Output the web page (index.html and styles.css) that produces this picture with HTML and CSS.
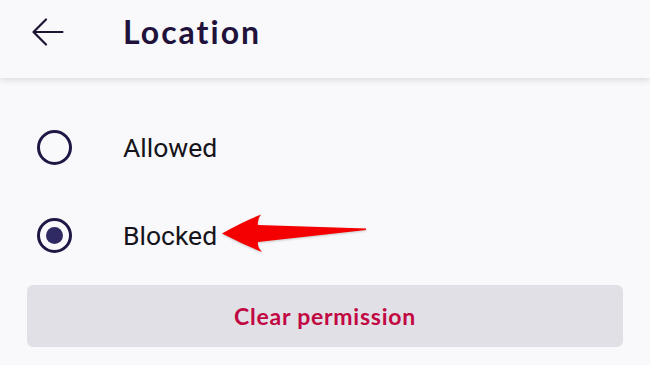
FILE: index.html
```html
<!DOCTYPE html>
<html>
<head>
<meta charset="utf-8">
<link rel="stylesheet" href="styles.css">
</head>
<body>
<div class="page">
  <header class="topbar">
    <svg class="back" width="32" height="28" viewBox="0 0 32 28" fill="none" stroke="#1f1533" stroke-width="2.2" stroke-linecap="round" stroke-linejoin="round">
      <path d="M30.5 14 H2 M14 1.5 L1.5 14 L14 26.5"/>
    </svg>
    <h1 class="title">Location</h1>
  </header>
  <main class="content">
    <div class="row">
      <span class="radio"></span>
      <span class="label">Allowed</span>
    </div>
    <div class="row">
      <span class="radio checked"></span>
      <span class="label">Blocked</span>
    </div>
    <button class="clear">Clear permission</button>
  </main>
  <svg class="pointer" width="155" height="45" viewBox="215 210 155 45">
    <path d="M222,233.5 Q242,222 261,214.5 Q257,219 258,225 L366,228.6 L366,230 L258,242 Q257,246.5 262,252 Q242,244 222,233.5 Z" fill="#f50000"/>
  </svg>
</div>
</body>
</html>
```
FILE: styles.css
```css
html, body {
  margin: 0;
  padding: 0;
  background: #f9f9fb;
}
.page {
  position: relative;
  width: 650px;
  height: 365px;
  overflow: hidden;
  background: #f9f9fb;
}
.topbar {
  height: 63px;
  padding-bottom: 15px;
  display: flex;
  align-items: center;
  padding-left: 32px;
  background: #f9f9fb;
  box-shadow: 0 2px 7px rgba(0, 0, 0, 0.13);
  position: relative;
  z-index: 1;
}
.back {
  display: block;
  flex: none;
}
.title {
  margin: 0 0 0 59px;
  font-family: Lato, "Open Sans", sans-serif;
  font-weight: 700;
  font-size: 32px;
  color: #20123a;
  letter-spacing: 2px;
}
.content {
  padding-top: 25px;
  display: flex;
  flex-direction: column;
}
.row {
  height: 88px;
  display: flex;
  align-items: center;
  padding-left: 37px;
}
.radio {
  box-sizing: border-box;
  width: 35px;
  height: 35px;
  border: 3.5px solid #1e1844;
  border-radius: 50%;
  display: flex;
  align-items: center;
  justify-content: center;
  flex: none;
}
.radio.checked::after {
  content: "";
  width: 17px;
  height: 17px;
  border-radius: 50%;
  background: #2f2a63;
}
.label {
  margin-left: 51px;
  font-family: Roboto, "Liberation Sans", sans-serif;
  font-size: 26.5px;
  color: #15141a;
}
.clear {
  margin: 6px 27px 0;
  height: 62px;
  border: none;
  border-radius: 6px;
  background: #e1e0e6;
  color: #c10842;
  font-family: Lato, "Open Sans", sans-serif;
  font-weight: 700;
  font-size: 23px;
  letter-spacing: 0.75px;
  padding: 0;
}
.pointer {
  position: absolute;
  left: 215px;
  top: 210px;
  filter: drop-shadow(0 1px 1px rgba(0, 0, 0, 0.2));
}
```
